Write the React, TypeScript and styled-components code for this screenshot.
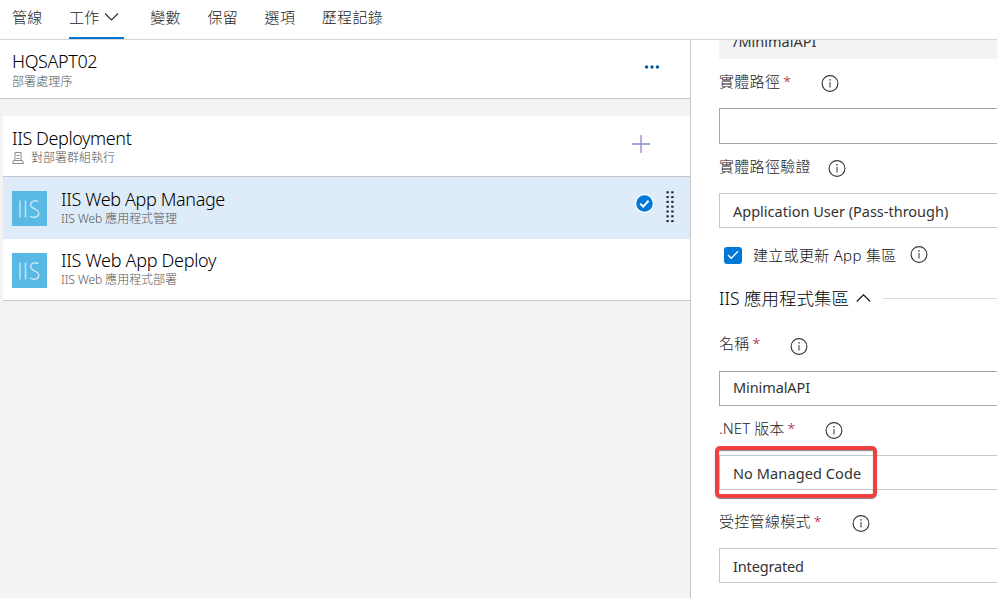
import React from 'react';
import styled, { createGlobalStyle } from 'styled-components';

const GlobalStyle = createGlobalStyle`
  * { box-sizing: border-box; }
  html, body { margin: 0; background: #fff; overflow: hidden; }
  body { font-family: "Noto Sans", "Noto Sans CJK TC", sans-serif; color: #333; }
`;

const Page = styled.div`
  width: 997px;
  height: 598px;
  display: flex;
  flex-direction: column;
  overflow: hidden;
`;

const Text = styled.span<{ $size: number; $track?: number; $color?: string; $light?: boolean; $line?: number }>`
  font-size: ${p => p.$size}px;
  letter-spacing: ${p => p.$track ?? 0}px;
  color: ${p => p.$color ?? '#333'};
  font-weight: ${p => (p.$light ? 300 : 400)};
  line-height: ${p => p.$line ?? 20}px;
  white-space: pre;
`;

const TabBar = styled.nav`
  flex: none;
  height: 40px;
  padding-left: 12px;
  display: flex;
  border-bottom: 1px solid #d6d6d6;
`;

const Tab = styled.div<{ $active?: boolean; $gap: number }>`
  height: 39px;
  width: ${p => (p.$active ? '55px' : 'auto')};
  margin-right: ${p => p.$gap}px;
  display: flex;
  align-items: center;
  gap: 4px;
  padding-bottom: ${p => (p.$active ? 1 : 3)}px;
  border-bottom: ${p => (p.$active ? '2px solid #0078d4' : 'none')};
  & > svg { margin-bottom: 3px; }
`;

const Body = styled.div`
  flex: 1;
  min-height: 0;
  display: flex;
`;

const TaskPane = styled.section`
  width: 691px;
  flex: none;
  background: #f3f3f3;
  border-right: 1px solid #c8c8c8;
`;

const StageHeader = styled.header`
  height: 59px;
  padding: 0 30px 0 12px;
  display: flex;
  align-items: center;
  background: #fff;
  border-bottom: 1px solid #c8c8c8;
`;

const TaskList = styled.div`
  margin: 17px 0 0 3px;
`;

const Row = styled.div<{ $height: number; $selected?: boolean; $line?: boolean }>`
  height: ${p => p.$height}px;
  padding-left: 9px;
  display: flex;
  align-items: center;
  background: ${p => (p.$selected ? '#deecf9' : '#fff')};
  border-bottom: ${p => (p.$line ? '1px solid #c8c8c8' : 'none')};
`;

const Titles = styled.div<{ $inset?: number; $gap: number; $above?: number; $below?: number }>`
  flex: 1;
  margin-left: ${p => p.$inset ?? 0}px;
  padding: ${p => p.$above ?? 0}px 0 ${p => p.$below ?? 0}px;
  display: flex;
  flex-direction: column;
  gap: ${p => p.$gap}px;
`;

const Subtitle = styled.div`
  display: flex;
  align-items: center;
  gap: 7px;
  height: 18px;
`;

const TaskLogo = styled.svg<{ $drop: number }>`
  flex: none;
  margin-top: ${p => p.$drop}px;
`;

const RowActions = styled.div<{ $right: number; $lift: number }>`
  display: flex;
  align-items: center;
  gap: 12px;
  margin-right: ${p => p.$right}px;
  padding-bottom: ${p => p.$lift * 2}px;
`;

const FormPane = styled.section`
  flex: 1;
  min-width: 0;
  padding-left: 28px;
  overflow: hidden;
`;

const ReadOnlyField = styled.div`
  height: 19px;
  padding: 0 0 8px 14px;
  display: flex;
  align-items: flex-end;
  background: #f3f3f3;
  overflow: hidden;
`;

const LabelRow = styled.div<{ $top: number; $bottom: number }>`
  height: 20px;
  margin: ${p => p.$top}px 0 ${p => p.$bottom}px;
  display: flex;
  align-items: center;
`;

const LabelText = styled(Text)`
  margin-bottom: 2px;
`;

const Required = styled.span`
  width: 10px;
  margin: 0 0 1px 3px;
  font-size: 14px;
  font-weight: 300;
  line-height: 20px;
  color: #a4062c;
`;

const InfoIcon = styled.svg<{ $left: number; $drop: number }>`
  flex: none;
  margin-left: ${p => p.$left}px;
  transform: translateY(${p => p.$drop}px);
`;

const Field = styled.div<{ $tall?: boolean; $strong?: boolean; $lift?: number }>`
  position: relative;
  height: ${p => (p.$tall ? 36 : 35)}px;
  padding: 0 0 ${p => p.$lift ?? 0}px 13px;
  display: flex;
  align-items: center;
  border: 1px solid ${p => (p.$strong ? '#a6a6a6' : '#c8c8c8')};
  border-right: 0;
`;

const Highlight = styled.div`
  position: absolute;
  left: -5.5px;
  top: -10px;
  width: 162px;
  height: 52px;
  border: 4px solid #ef4040;
  border-radius: 5px;
  box-shadow: 0 1px 1px rgba(60, 60, 60, 0.65), inset 0 1px 1px rgba(60, 60, 60, 0.65);
`;

const CheckBox = styled.span`
  width: 18px;
  height: 17px;
  margin: 0 11px 0 5px;
  display: flex;
  align-items: center;
  justify-content: center;
  border-radius: 3px;
  background: #0078d7;
`;

const SectionChevron = styled.span`
  display: flex;
  margin-left: 2px;
`;

const Divider = styled.div`
  flex: 1;
  height: 1px;
  margin-left: 12px;
  background: #dcdcdc;
`;

function Info({ left, drop = 1.5 }: { left: number; drop?: number }) {
  return (
    <InfoIcon $left={left} $drop={drop} width="18" height="18" viewBox="0 0 18 18" fill="none">
      <circle cx="9" cy="9" r="7.9" stroke="#3a3a3a" strokeWidth="1.15" />
      <path d="M9 7.5V13" stroke="#444" strokeWidth="1.1" />
      <circle cx="9" cy="5.4" r=".8" fill="#444" />
    </InfoIcon>
  );
}

function IisLogo({ drop = 1 }: { drop?: number }) {
  return (
    <TaskLogo $drop={drop} width="35" height="35" viewBox="0 0 35 35">
      <rect width="35" height="35" fill="#59b9e4" />
      <g fill="none" stroke="#c4e8f8" strokeWidth="1.4">
        <path d="M8 9.5V26.5M13.5 9.5V26.5" />
        <path d="M26.4 10.6C23.2 9 18.6 9.8 18.6 13.7C18.6 18.2 26.8 17.4 26.8 22.2C26.8 26.6 21.4 27.1 18 25" />
      </g>
    </TaskLogo>
  );
}

function Chevron({ up, color = '#333' }: { up?: boolean; color?: string }) {
  return (
    <svg width="15" height="10" viewBox="0 0 15 10" fill="none" stroke={color} strokeWidth="1.2">
      <path d={up ? 'M.8 8.5L7.5 1.8L14.2 8.5' : 'M1 1.5L7.5 8L14 1.5'} />
    </svg>
  );
}

function MoreIcon() {
  return (
    <svg width="16" height="4" viewBox="0 0 16 4" fill="#005a9e">
      <circle cx="2.6" cy="2" r="1.7" />
      <circle cx="8" cy="2" r="1.7" />
      <circle cx="13.4" cy="2" r="1.7" />
    </svg>
  );
}

function AddIcon() {
  return (
    <svg width="18" height="18" viewBox="0 0 18 18" fill="none">
      <path d="M0 9H18" stroke="#7f96ca" strokeWidth="1.6" />
      <path d="M9 0V18" stroke="#a08fc6" strokeWidth="1.4" />
    </svg>
  );
}

function GroupIcon() {
  return (
    <svg width="12" height="12" viewBox="0 0 12 12" fill="none" stroke="#8c8c8c" strokeWidth="1">
      <path d="M3 .5H9V8.5H3ZM3 8.5H1.5L.5 11.5H11.5L10.5 8.5H9M4.5 3.5H7.5M4.5 6.5H7.5" />
    </svg>
  );
}

function SelectedIcon() {
  return (
    <svg width="19" height="19" viewBox="0 0 19 19" fill="none">
      <circle cx="9.5" cy="9.5" r="9.5" fill="#fff" />
      <circle cx="9.5" cy="9.5" r="8.3" fill="#0078d7" />
      <path d="M5.2 9.8L8.2 12.6L13.6 6.8" stroke="#fff" strokeWidth="2" />
    </svg>
  );
}

const Grip = styled.svg`
  margin-top: 7px;
`;

function DragHandle() {
  const rows = [0, 1, 2, 3, 4, 5, 6];
  return (
    <Grip width="8" height="32" viewBox="0 0 8 32" fill="#222">
      {rows.map(i => (
        <React.Fragment key={i}>
          <rect x="0.4" y={0.3 + i * 4.8} width="2.4" height="2" />
          <rect x="5.2" y={0.3 + i * 4.8} width="2.4" height="2" />
        </React.Fragment>
      ))}
    </Grip>
  );
}

const tabs = [
  { label: '管線', gap: 26.4 },
  { label: '工作', gap: 26.2, active: true },
  { label: '變數', gap: 26.6 },
  { label: '保留', gap: 26.6 },
  { label: '選項', gap: 26.6 },
  { label: '歷程記錄', gap: 0 },
];

function Title({ children, track }: { children: string; track: number }) {
  return <Text $size={18} $track={track} $color="#000" $light>{children}</Text>;
}

function Label({ children, track = 0.3 }: { children: string; track?: number }) {
  return <LabelText $size={15} $track={track} $color="#222" $light>{children}</LabelText>;
}

function Value({ children, track = 0 }: { children: string; track?: number }) {
  return <Text $size={14.5} $track={track}>{children}</Text>;
}

function Sub({ children, track = 0 }: { children: string; track?: number }) {
  return <Text $size={12} $line={18} $track={track} $color="#555" $light>{children}</Text>;
}

export default function App() {
  return (
    <Page>
      <GlobalStyle />
      <TabBar>
        {tabs.map(t => (
          <Tab key={t.label} $active={t.active} $gap={t.gap}>
            <Label>{t.label}</Label>
            {t.active && <Chevron />}
          </Tab>
        ))}
      </TabBar>
      <Body>
        <TaskPane>
          <StageHeader>
            <Titles $gap={2} $above={4}>
              <Title track={-0.4}>HQSAPT02</Title>
              <Subtitle><Sub track={0.1}>部署處理序</Sub></Subtitle>
            </Titles>
            <RowActions $right={0} $lift={2}><MoreIcon /></RowActions>
          </StageHeader>
          <TaskList>
            <Row $height={61} $line>
              <Titles $gap={1} $above={3}>
                <Title track={-0.4}>IIS Deployment</Title>
                <Subtitle><GroupIcon /><Sub>對部署群組執行</Sub></Subtitle>
              </Titles>
              <RowActions $right={40} $lift={2}><AddIcon /></RowActions>
            </Row>
            <Row $height={62} $selected>
              <IisLogo />
              <Titles $inset={14} $gap={1} $above={1}>
                <Title track={-0.37}>IIS Web App Manage</Title>
                <Subtitle><Sub track={-0.05}>IIS Web 應用程式管理</Sub></Subtitle>
              </Titles>
              <RowActions $right={16} $lift={5}><SelectedIcon /><DragHandle /></RowActions>
            </Row>
            <Row $height={62} $line>
              <IisLogo drop={2} />
              <Titles $inset={14} $gap={1} $below={1}>
                <Title track={-0.3}>IIS Web App Deploy</Title>
                <Subtitle><Sub track={-0.05}>IIS Web 應用程式部署</Sub></Subtitle>
              </Titles>
            </Row>
          </TaskList>
        </TaskPane>
        <FormPane>
          <ReadOnlyField><Value>/MinimalAPI</Value></ReadOnlyField>

          <LabelRow $top={13} $bottom={16}>
            <Label>實體路徑</Label><Required>*</Required><Info left={28} />
          </LabelRow>
          <Field $tall $strong />

          <LabelRow $top={13} $bottom={16}>
            <Label>實體路徑驗證</Label><Info left={17} />
          </LabelRow>
          <Field><Value>Application User (Pass-through)</Value></Field>

          <LabelRow $top={17} $bottom={23}>
            <CheckBox>
              <svg width="12" height="10" viewBox="0 0 12 10" fill="none" stroke="#fff" strokeWidth="1.3">
                <path d="M1 5L4.2 8.3L11 1.3" />
              </svg>
            </CheckBox>
            <Text $size={15} $track={0.3} $color="#111" $light>建立或更新 App 集區</Text><Info left={13} drop={-0.5} />
          </LabelRow>

          <LabelRow $top={0} $bottom={26}>
            <Text $size={17.5} $color="#000" $light>IIS 應用程式集區 </Text>
            <SectionChevron><Chevron up color="#111" /></SectionChevron>
            <Divider />
          </LabelRow>

          <LabelRow $top={0} $bottom={17}>
            <Label>名稱</Label><Required>*</Required><Info left={27} drop={2.5} />
          </LabelRow>
          <Field $strong $lift={3}><Value track={-0.1}>MinimalAPI</Value></Field>

          <LabelRow $top={13} $bottom={16}>
            <Label track={0.1}>.NET 版本</Label><Required>*</Required><Info left={28} />
          </LabelRow>
          <Field><Value track={0.1}>No Managed Code</Value><Highlight /></Field>

          <LabelRow $top={22} $bottom={16}>
            <Label>受控管線模式</Label><Required>*</Required><Info left={28} />
          </LabelRow>
          <Field><Value track={-0.15}>Integrated</Value></Field>
        </FormPane>
      </Body>
    </Page>
  );
}
